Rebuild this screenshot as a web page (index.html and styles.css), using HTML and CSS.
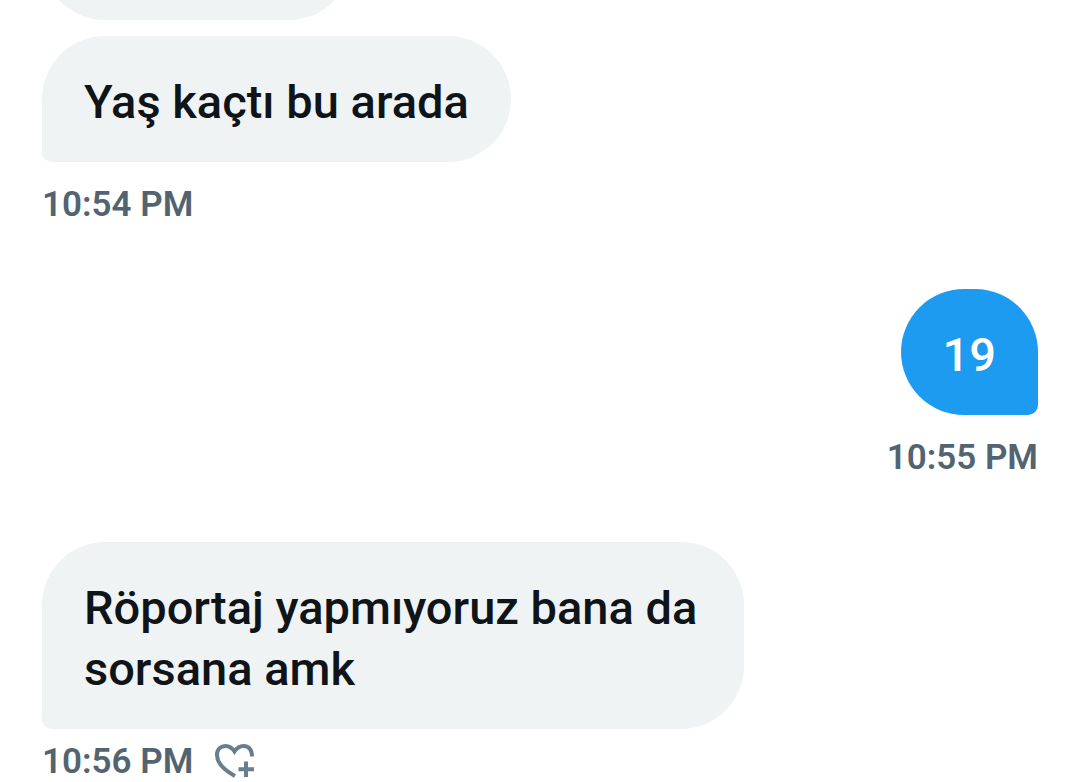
FILE: index.html
```html
<!DOCTYPE html>
<html lang="tr">
<head>
  <meta charset="UTF-8">
  <meta name="viewport" content="width=device-width, initial-scale=1">
  <title>Messages</title>
  <link rel="stylesheet" href="styles.css">
</head>
<body>
<main class="chat">
  <div class="message previous">
    <div class="bubble"></div>
  </div>
  <div class="message">
    <p class="bubble">Yaş kaçtı bu arada</p>
    <div class="meta"><time>10:54 PM</time></div>
  </div>
  <div class="message sent">
    <p class="bubble">19</p>
    <div class="meta"><time>10:55 PM</time></div>
  </div>
  <div class="message">
    <p class="bubble">Röportaj yapmıyoruz bana da sorsana amk</p>
    <div class="meta last">
      <time>10:56 PM</time>
      <button class="react" type="button" aria-label="Add reaction">
        <svg viewBox="0 0 40 36" width="40" height="36">
          <path d="M20 32C9 26 2 18.500 2 11C2 5 6 2 10.500 2C14.500 2 17 3.800 19.500 7.500C22 3.800 24.500 2 28.500 2C33.500 2 37 5.500 37 12.500"/>
          <path d="M31 17.500V33M23.500 25.200H39"/>
        </svg>
      </button>
    </div>
  </div>
</main>
</body>
</html>
```

FILE: styles.css
```css
* {
  box-sizing: border-box;
}

body {
  margin: 0;
  background-color: #fff;
  color: #0f1419;
  font-family: Roboto, "Liberation Sans", sans-serif;
}

.chat {
  display: flex;
  flex-direction: column;
  padding: 0 42px;
  height: 100vh;
  overflow: hidden;
}

.message {
  display: flex;
  flex-direction: column;
  flex-shrink: 0;
  align-items: flex-start;
  margin-bottom: 64px;
}

.bubble {
  margin: 0;
  padding: 35px 42px 30px;
  max-width: 70.5%;
  border-radius: 63px 63px 63px 10px;
  background-color: #eff3f4;
  font-size: 47px;
  font-weight: 500;
  line-height: 61px;
}

.meta {
  display: flex;
  align-items: center;
  gap: 22px;
  margin-top: 23px;
  color: #536471;
  font-size: 35px;
  font-weight: 600;
  line-height: 40px;
}

.last {
  margin-top: 13px;
}

.sent {
  align-items: flex-end;
}

.sent .bubble {
  border-radius: 63px 63px 10px 63px;
  background-color: #1d9bf0;
  color: #fff;
}

/* only the bottom of this one is scrolled into view */
.previous {
  margin-bottom: 16px;
  height: 20px;
  justify-content: flex-end;
}

.previous .bubble {
  flex-shrink: 0;
  width: 310px;
  height: 126px;
  border-radius: 63px;
}

.react {
  display: flex;
  padding: 0;
  border: 0;
  background: none;
}

.react svg {
  fill: none;
  stroke: #687e8c;
  stroke-width: 4;
}
```
